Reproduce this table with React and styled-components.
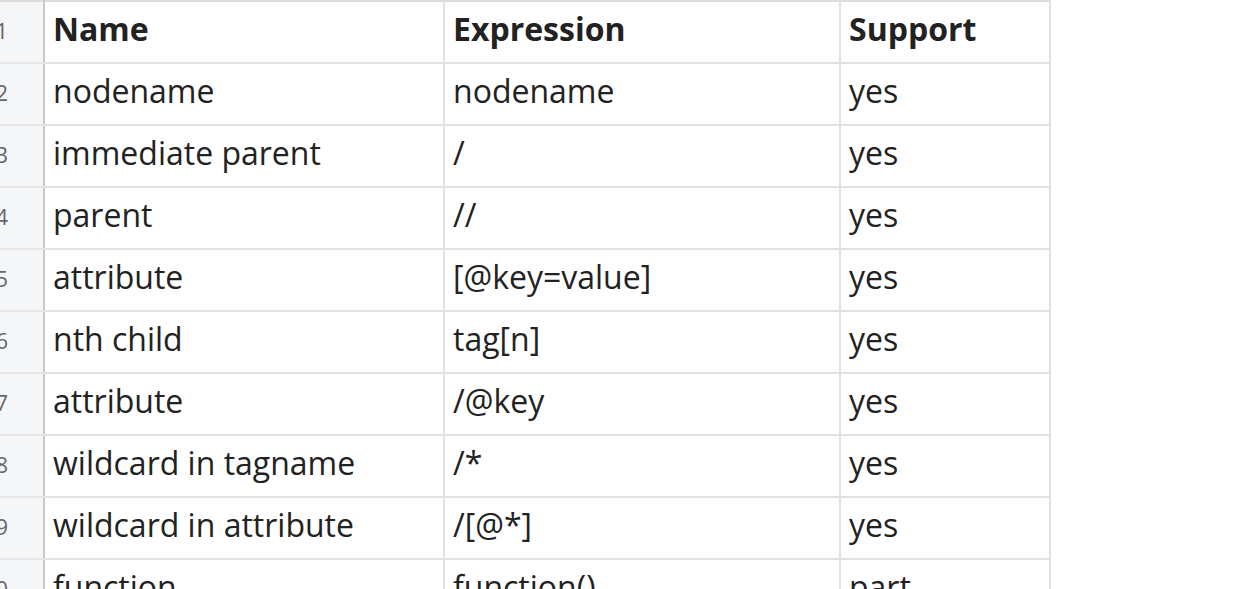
import React from "react";
import styled, { createGlobalStyle } from "styled-components";

const Global = createGlobalStyle`
  body {
    margin: 0;
    background: #fff;
    font-family: "Open Sans", "Noto Sans", sans-serif;
    color: #222;
    overflow: hidden;
  }
`;

const rows = [
  ["nodename", "nodename", "yes"],
  ["immediate parent", "/", "yes"],
  ["parent", "//", "yes"],
  ["attribute", "[@key=value]", "yes"],
  ["nth child", "tag[n]", "yes"],
  ["attribute", "/@key", "yes"],
  ["wildcard in tagname", "/*", "yes"],
  ["wildcard in attribute", "/[@*]", "yes"],
  ["function", "function()", "part"],
];

const Sheet = () => {
  return (
    <Wrap>
      <Table>
        <colgroup>
          <col style={{ width: 64 }} />
          <col style={{ width: 400 }} />
          <col style={{ width: 396 }} />
          <col style={{ width: 210 }} />
        </colgroup>
        <tbody>
          <Row>
            <Gutter>1</Gutter>
            <Cell head>Name</Cell>
            <Cell head>Expression</Cell>
            <Cell head>Support</Cell>
          </Row>
          {rows.map((r, i) => (
            <Row key={i}>
              <Gutter>{i + 2}</Gutter>
              <Cell>{r[0]}</Cell>
              <Cell>{r[1]}</Cell>
              <Cell>{r[2]}</Cell>
            </Row>
          ))}
        </tbody>
      </Table>
    </Wrap>
  );
};

export default function App() {
  return (
    <>
      <Global />
      <Sheet />
    </>
  );
}

const Wrap = styled.div`
  margin-left: -20px;
  height: 589px;
  overflow: hidden;
`;

const Table = styled.table`
  border-collapse: collapse;
  table-layout: fixed;
  width: 1070px;
  border-top: 2px solid #dcdcdc;
`;

const Row = styled.tr`
  height: 62px;
`;

const Gutter = styled.td`
  background: #f5f6f7;
  border-right: 2px solid #c8c8c8;
  border-bottom: 2px solid #e6e6e6;
  text-align: right;
  padding: 0 35px 4px 0;
  color: #666;
  font-size: 22px;
  box-sizing: border-box;
`;

const Cell = styled.td`
  padding: 0 8px 6px;
  border-right: 2px solid #e2e2e2;
  border-bottom: 2px solid #e2e2e2;
  font-size: 32px;
  line-height: 1.2;
  font-weight: ${(p) => (p.head ? 700 : 400)};
  color: #222;
  white-space: nowrap;
  overflow: hidden;
  vertical-align: middle;
`;
